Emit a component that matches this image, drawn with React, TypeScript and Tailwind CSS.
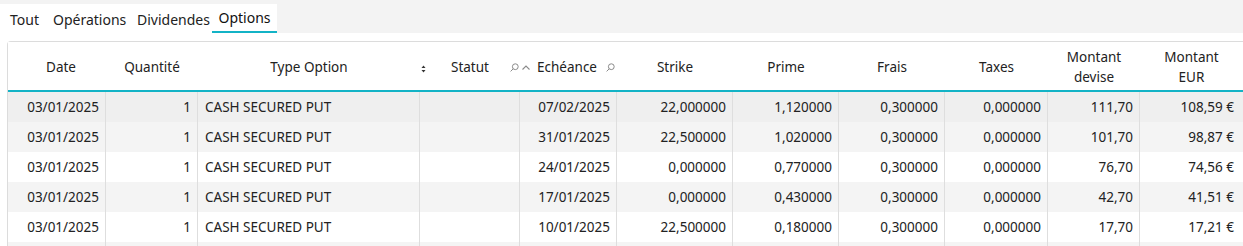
import React from 'react';

type OptionRow = {
  date: string;
  qty: number;
  type: string;
  statut: string;
  echeance: string;
  strike: string;
  prime: string;
  frais: string;
  taxes: string;
  devise: string;
  eur: string;
};

const rows: OptionRow[] = [
  { date: '03/01/2025', qty: 1, type: 'CASH SECURED PUT', statut: '', echeance: '07/02/2025', strike: '22,000000', prime: '1,120000', frais: '0,300000', taxes: '0,000000', devise: '111,70', eur: '108,59 €' },
  { date: '03/01/2025', qty: 1, type: 'CASH SECURED PUT', statut: '', echeance: '31/01/2025', strike: '22,500000', prime: '1,020000', frais: '0,300000', taxes: '0,000000', devise: '101,70', eur: '98,87 €' },
  { date: '03/01/2025', qty: 1, type: 'CASH SECURED PUT', statut: '', echeance: '24/01/2025', strike: '0,000000', prime: '0,770000', frais: '0,300000', taxes: '0,000000', devise: '76,70', eur: '74,56 €' },
  { date: '03/01/2025', qty: 1, type: 'CASH SECURED PUT', statut: '', echeance: '17/01/2025', strike: '0,000000', prime: '0,430000', frais: '0,300000', taxes: '0,000000', devise: '42,70', eur: '41,51 €' },
  { date: '03/01/2025', qty: 1, type: 'CASH SECURED PUT', statut: '', echeance: '10/01/2025', strike: '22,500000', prime: '0,180000', frais: '0,300000', taxes: '0,000000', devise: '17,70', eur: '17,21 €' }
];

const cols = 'grid grid-cols-[98px_92px_222px_100px_97px_116px_106px_106px_103px_92px_1fr]';

const rowBg = ['bg-[#efefef]', 'bg-[#f4f4f4]', 'bg-white', 'bg-[#f4f4f4]', 'bg-white'];

const SearchIcon = () => (
  <svg width="9" height="9" viewBox="0 0 9 9" fill="none" stroke="#8a8a8a" strokeWidth="1">
    <circle cx="5.3" cy="3.7" r="2.9" />
    <path d="M3.2 5.8 L0.6 8.4" />
  </svg>
);

const tabs = [
  { label: 'Tout', cls: 'w-[43px]' },
  { label: 'Opérations', cls: 'w-[84px]' },
  { label: 'Dividendes', cls: 'w-[75px]' }
];

const App: React.FC = () => {
  const cell = 'h-[30px] flex items-center border-r border-[#dedede] px-[6px] whitespace-nowrap';

  return (
    <div className="h-[246px] w-[1243px] overflow-hidden bg-white font-['Noto_Sans',sans-serif] text-[#222]">
      {/* tabs */}
      <div className="h-[33px] bg-[#f3f3f3] pt-[4px]">
        <div className="flex h-[29px] w-[277px] bg-white pl-[10px] text-[14px] leading-none">
          {tabs.map((t) => (
            <div key={t.label} className={`${t.cls} flex h-full items-center whitespace-nowrap pt-[2px]`}>
              {t.label}
            </div>
          ))}
          <div className="flex h-full w-[65px] items-center justify-center border-b-2 border-[#13b3c6] pt-[1px] text-[#111]">
            Options
          </div>
        </div>
      </div>

      {/* table card */}
      <div className="ml-[7px] mt-[8px] rounded-tl-[4px] border-l border-t border-[#dcdcdc] text-[13.5px]">
        <div className={`${cols} h-[50px] border-b-2 border-[#13b3c6] bg-white pt-[2px] text-center leading-[20px]`}>
          <div className="flex items-center justify-center pl-[8px]">Date</div>
          <div className="flex items-center justify-center">Quantité</div>
          <div className="relative flex items-center justify-center">
            Type Option
            <svg className="absolute right-[-6px] top-[21px]" width="5" height="8" viewBox="0 0 5 8" fill="#333">
              <path d="M2.5 0.5 L4.5 3 L0.5 3 Z" />
              <path d="M2.5 7.5 L4.5 5 L0.5 5 Z" />
            </svg>
          </div>
          <div className="relative flex items-center justify-center">
            Statut
            <span className="absolute right-[1px] top-[19px]">
              <SearchIcon />
            </span>
            <svg className="absolute right-[-10px] top-[21px]" width="8" height="5" viewBox="0 0 8 5" fill="none" stroke="#8a8a8a" strokeWidth="1.1">
              <path d="M0.5 4.5 L4 1 L7.5 4.5" />
            </svg>
          </div>
          <div className="relative flex items-center justify-center pr-[3px]">
            Echéance
            <span className="absolute right-[2px] top-[19px]">
              <SearchIcon />
            </span>
          </div>
          <div className="flex items-center justify-center">Strike</div>
          <div className="flex items-center justify-center">Prime</div>
          <div className="flex items-center justify-center">Frais</div>
          <div className="flex items-center justify-center">Taxes</div>
          <div className="flex items-center justify-center">
            Montant
            <br />
            devise
          </div>
          <div className="flex items-center justify-center">
            Montant
            <br />
            EUR
          </div>
        </div>

        {rows.map((r, i) => (
          <div key={i} className={`${cols} ${rowBg[i]}`}>
            <div className={`${cell} justify-end`}>{r.date}</div>
            <div className={`${cell} justify-end`}>{r.qty}</div>
            <div className={`${cell} pl-[7px]`}>{r.type}</div>
            <div className={cell}>{r.statut}</div>
            <div className={`${cell} justify-end`}>{r.echeance}</div>
            <div className={`${cell} justify-end`}>{r.strike}</div>
            <div className={`${cell} justify-end`}>{r.prime}</div>
            <div className={`${cell} justify-end`}>{r.frais}</div>
            <div className={`${cell} justify-end`}>{r.taxes}</div>
            <div className={`${cell} justify-end`}>{r.devise}</div>
            <div className="flex h-[30px] items-center justify-end whitespace-nowrap pr-[9px]">{r.eur}</div>
          </div>
        ))}
        <div className={`${cols} h-[8px] bg-[#f4f4f4]`}>
          <div className="border-r border-[#dedede]" />
          <div className="border-r border-[#dedede]" />
          <div className="border-r border-[#dedede]" />
          <div className="border-r border-[#dedede]" />
          <div className="border-r border-[#dedede]" />
          <div className="border-r border-[#dedede]" />
          <div className="border-r border-[#dedede]" />
          <div className="border-r border-[#dedede]" />
          <div className="border-r border-[#dedede]" />
          <div className="border-r border-[#dedede]" />
          <div />
        </div>
      </div>
    </div>
  );
};

export default App;
